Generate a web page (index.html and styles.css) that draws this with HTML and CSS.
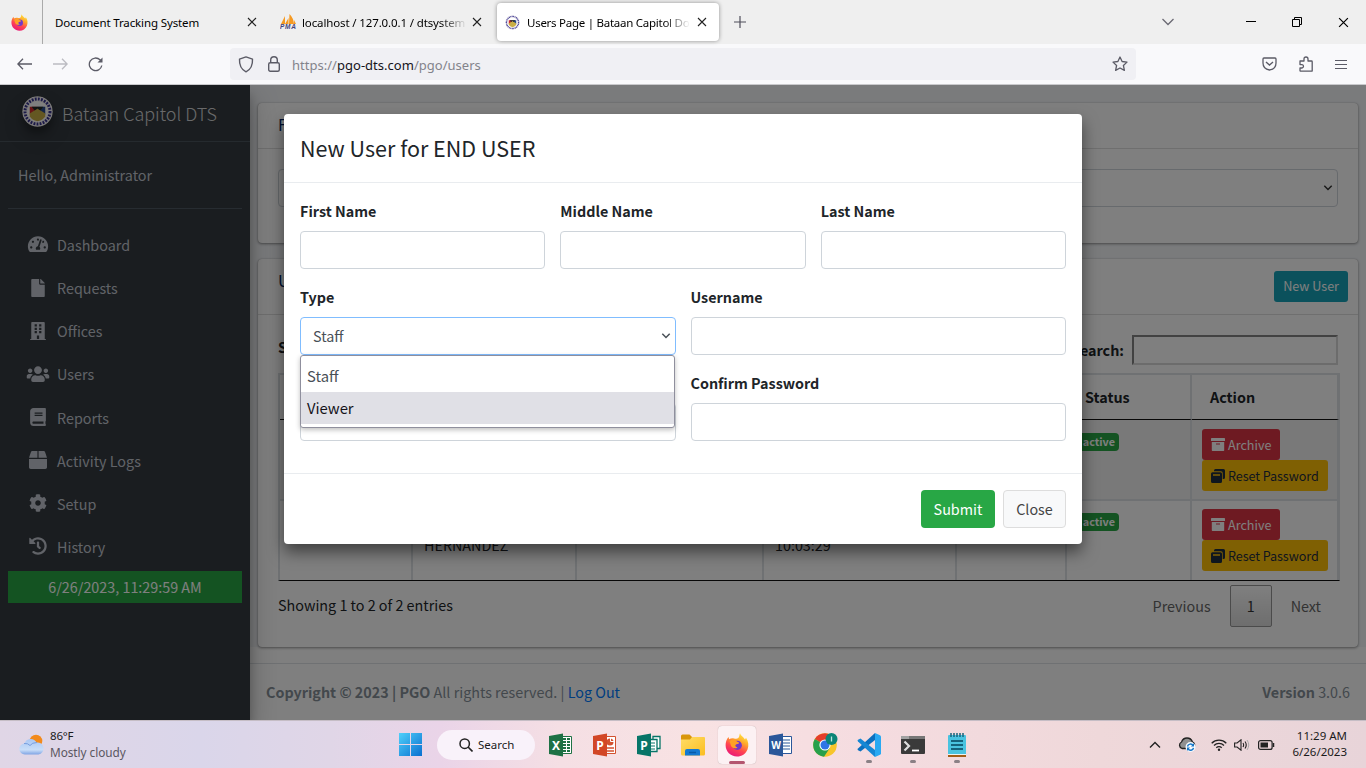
FILE: index.html
```html
<!DOCTYPE html>
<html lang="en">
<head>
<meta charset="utf-8">
<title>Users Page | Bataan Capitol Document Tracking System</title>
<link rel="stylesheet" href="styles.css">
</head>
<body>
<svg class="defs" width="0" height="0">
  <defs>
    <linearGradient id="fx" x1=".8" y1="0" x2=".3" y2="1"><stop offset="0" stop-color="#fff044"/><stop offset=".35" stop-color="#ffa52a"/><stop offset=".65" stop-color="#ff4550"/><stop offset="1" stop-color="#e8167a"/></linearGradient>
    <linearGradient id="win" x1="0" y1="0" x2="1" y2="1"><stop offset="0" stop-color="#4fd0fa"/><stop offset="1" stop-color="#0a6fd0"/></linearGradient>
    <linearGradient id="cloud" x1="0" y1="0" x2="0" y2="1"><stop offset="0" stop-color="#a9c7f4"/><stop offset=".7" stop-color="#c9def8"/><stop offset="1" stop-color="#7fa4e4"/></linearGradient>
    <linearGradient id="folder" x1="0" y1="0" x2="1" y2="1"><stop offset="0" stop-color="#ffdd68"/><stop offset="1" stop-color="#fbbd20"/></linearGradient>
    <symbol id="firefox" viewBox="0 0 24 24">
      <path fill="url(#fx)" d="M15 .3c.6 2.500 3.500 3.500 5 6.200l1-1.800C23.500 8 24 12.500 22.500 16.500c-1.800 4.500-5.700 7-10.500 7C5.500 23.500.6 18.500.6 12.300c0-3.300 1-6 2.900-8.300l.7 2.300c1.300-1 3.100-1.300 4.800-.9 1.500.6 3.200.6 4.300-.3C14.500 4 14.200 2 15 .3z"/>
      <circle cx="12.300" cy="12.300" r="4.600" fill="#7338c8"/>
      <path fill="#ffa126" d="M4.500 8c2.500-2 5.500-1.500 7.500.6 1 .8 2.600.8 2 1.700-.6 1-2.600.6-3.500 1.700-.5 1 .4 2.200 2 2.400-2.500 2-6.500.3-7-3.200z"/>
    </symbol>
    <symbol id="seal" viewBox="0 0 32 32">
      <circle cx="16" cy="16" r="15.700" fill="#f4f1f2"/>
      <circle cx="16" cy="16" r="12.900" fill="none" stroke="#37328f" stroke-width="3" stroke-dasharray="1.900 1.300"/>
      <circle cx="16" cy="16" r="10.500" fill="#fff"/>
      <path d="M8 11h8v8H8z" fill="#d0262c"/><path d="M16 11h8v8h-8z" fill="#27488c"/>
      <path d="M8 18l8-5 8 5v3q-2 4-8 5-6-1-8-5z" fill="#c9ae45"/><path d="M10 11h12l-3 4-3-2-3 2z" fill="#222b25"/>
    </symbol>
    <symbol id="close" viewBox="0 0 10 10"><path d="M1 1l8 8M9 1L1 9" fill="none" stroke="currentColor" stroke-width="1.100"/></symbol>
    <symbol id="chev" viewBox="0 0 10 6"><path d="M1.300 .8L5 4.500 8.700 .8" fill="none" stroke="currentColor" stroke-width="1.500"/></symbol>
    <symbol id="archive" viewBox="0 0 14 14"><path fill="currentColor" fill-rule="evenodd" d="M.7 0h12.600q.7 0 .7.700V3H0V.7Q0 0 .7 0zM.8 4h12.400v8.300q0 .7-.7.700H1.500q-.7 0-.7-.7zM5 5.500v1h4v-1z"/></symbol>
    <symbol id="clone" viewBox="0 0 14 14"><path fill="currentColor" fill-rule="evenodd" d="M4.500 0h8Q14 0 14 1.500v7Q14 10 12.500 10h-.8V4q0-1.700-1.700-1.700H3V1.500Q3 0 4.500 0zM1.500 3.200h8Q11 3.200 11 4.700v7.800Q11 14 9.500 14h-8Q0 14 0 12.500V4.700Q0 3.200 1.500 3.200zM2 5.200v1.600h7V5.200z"/></symbol>
  </defs>
</svg>

<header class="browser">
  <div class="tabstrip">
    <div class="pin"><svg width="17" height="17"><use href="#firefox"/></svg></div>
    <div class="tab tab-a"><span class="tab-title">Document Tracking System</span><svg class="x" width="10" height="10"><use href="#close"/></svg></div>
    <div class="tab tab-b">
      <svg width="17" height="16" viewBox="0 0 17 16"><path d="M5 2v8H1zM9.500 0q4 4 4.500 10H9zM8.500 4v6H5zM14 6l2 4h-2z" fill="#f59a23"/><text x="0" y="15" font-size="6.500" font-weight="bold" font-style="italic" fill="#44447c" font-family="Liberation Sans" textLength="16">PMA</text></svg>
      <span class="tab-title faded">localhost / 127.0.0.1 / dtsystem /</span><svg class="x" width="10" height="10"><use href="#close"/></svg>
    </div>
    <div class="tab tab-c">
      <svg width="15" height="15"><use href="#seal"/></svg>
      <span class="tab-title faded">Users Page | Bataan Capitol Docu</span><svg class="x" width="10" height="10"><use href="#close"/></svg>
    </div>
    <svg class="plus" width="12" height="12" viewBox="0 0 12 12"><path d="M6 0v12M0 6h12" stroke="#4f4e5a" stroke-width="1.200"/></svg>
    <div class="winctl">
      <svg width="12" height="8" viewBox="0 0 12 8"><path d="M.5 1l5.500 5.500L11.500 1" fill="none" stroke="#6b6a74" stroke-width="1.300"/></svg>
      <svg class="min" width="10" height="2"><path d="M0 .5h10" stroke="#000"/></svg>
      <svg class="max" width="10" height="10" viewBox="0 0 10 10"><path d="M.5 2.500h7v7h-7zM2.500 2.500v-2h7v7h-2" fill="none" stroke="#000"/></svg>
      <svg width="11" height="11"><use href="#close"/></svg>
    </div>
  </div>
  <div class="toolbar">
    <div class="nav">
      <svg width="15" height="12" viewBox="0 0 15 12"><path d="M6 .7L.9 6 6 11.300M1 6h14" fill="none" stroke="#5b5b66" stroke-width="1.300"/></svg>
      <svg width="15" height="12" viewBox="0 0 15 12"><path d="M9 .7L14.100 6 9 11.300M14 6H0" fill="none" stroke="#bcbcc2" stroke-width="1.300"/></svg>
      <svg width="16" height="16" viewBox="0 0 16 16"><path d="M13.800 9.500A6.300 6.300 0 1 1 12 3.800l1 1" fill="none" stroke="#5b5b66" stroke-width="1.300"/><path d="M14.500 1.500v5H9.500z" fill="#5b5b66"/></svg>
    </div>
    <div class="urlbar">
      <svg width="16" height="17" viewBox="0 0 16 17"><path d="M8 .9l6.500 2.200c.3 5.500-1 10-6.500 12.800C2.500 13 1.200 8.600 1.500 3.100z" fill="none" stroke="#5b5b66" stroke-width="1.400" stroke-linejoin="round"/></svg>
      <svg width="12" height="16" viewBox="0 0 12 16"><rect x=".7" y="6.700" width="10.600" height="8.500" rx="1.500" fill="none" stroke="#5b5b66" stroke-width="1.400"/><path d="M2.700 6.500V4a3.300 3.300 0 0 1 6.600 0v2.500" fill="none" stroke="#5b5b66" stroke-width="1.400"/></svg>
      <span class="url">https://<b>pgo-dts.com</b>/pgo/users</span>
      <svg class="star" width="16" height="16" viewBox="0 0 16 16"><path d="M8 1l2.100 4.500 4.900.6-3.600 3.400 1 4.900L8 12l-4.400 2.400 1-4.900L1 6.100l4.900-.6z" fill="none" stroke="#5b5b66" stroke-width="1.300" stroke-linejoin="round"/></svg>
    </div>
    <div class="tools">
      <svg width="15" height="14" viewBox="0 0 15 14"><path d="M2 1h11q1 0 1 1v4q0 6-6.500 7Q1 12 1 6V2q0-1 1-1z" fill="none" stroke="#5b5b66" stroke-width="1.300"/><path d="M4 5l3.500 3L11 5" fill="none" stroke="#5b5b66" stroke-width="1.400"/></svg>
      <svg width="14" height="16" viewBox="0 0 14 16"><path d="M1 5h4V3q0-2 2-2t2 2v2h3.500q.7 0 .7.700v9.400H1.700q-.7 0-.7-.7V12h2q1.500-.2 1.500-1.700T3 8.600H1z" fill="none" stroke="#5b5b66" stroke-width="1.300" stroke-linejoin="round"/></svg>
      <svg width="12" height="11" viewBox="0 0 12 11"><path d="M0 1.500h12M0 5.500h12M0 9.500h12" stroke="#5b5b66" stroke-width="1.200"/></svg>
    </div>
  </div>
</header>

<main class="page">
  <aside class="sidebar">
    <div class="brand"><svg width="31" height="31"><use href="#seal"/></svg><span>Bataan Capitol DTS</span></div>
    <div class="hello">Hello, Administrator</div>
    <nav class="menu">
      <a><svg viewBox="0 0 576 512"><path d="M288 32C128.940 32 0 160.940 0 320c0 52.800 14.250 102.260 39.060 144.800 5.610 9.620 16.300 15.200 27.440 15.200h443c11.140 0 21.830-5.580 27.440-15.200C561.750 422.260 576 372.800 576 320c0-159.060-128.940-288-288-288zm0 64c14.710 0 26.580 10.130 30.320 23.650-1.110 2.260-2.640 4.230-3.450 6.670l-9.220 27.670c-5.130 3.490-10.970 6.010-17.640 6.010-17.670 0-32-14.330-32-32S270.330 96 288 96zM96 384c-17.670 0-32-14.330-32-32s14.330-32 32-32 32 14.330 32 32-14.330 32-32 32zm48-160c-17.670 0-32-14.330-32-32s14.330-32 32-32 32 14.330 32 32-14.330 32-32 32zm246.770-72.410l-61.330 184C343.130 347.330 352 364.540 352 384c0 11.720-3.380 22.550-8.880 32H232.880c-5.500-9.450-8.880-20.280-8.880-32 0-33.940 26.500-61.430 59.900-63.590l61.340-184.010c4.170-12.560 17.730-19.450 30.360-15.170 12.570 4.190 19.350 17.790 15.170 30.360zm14.660 57.200l15.520-46.550c3.470-1.290 7.130-2.230 11.050-2.230 17.670 0 32 14.330 32 32s-14.330 32-32 32c-11.380-.01-20.890-6.280-26.570-15.220zM480 384c-17.670 0-32-14.330-32-32s14.330-32 32-32 32 14.330 32 32-14.330 32-32 32z"/></svg>Dashboard</a>
      <a><svg viewBox="0 0 384 512"><path d="M224 136V0H24C10.700 0 0 10.700 0 24v464c0 13.300 10.700 24 24 24h336c13.300 0 24-10.700 24-24V160H248c-13.200 0-24-10.800-24-24zm160-14.100v6.100H256V0h6.100c6.400 0 12.500 2.500 17 7l97.900 98c4.500 4.500 7 10.600 7 16.900z"/></svg>Requests</a>
      <a><svg viewBox="0 0 448 512"><path fill-rule="evenodd" d="M436 480h-20V24c0-13-11-24-24-24H56C43 0 32 11 32 24v456H12c-7 0-12 5-12 12v20h448v-20c0-7-5-12-12-12zM128 64h64v64h-64zM256 64h64v64h-64zM128 160h64v64h-64zM256 160h64v64h-64zM128 256h64v64h-64zM256 256h64v64h-64zM192 384h64v96h-64z"/></svg>Offices</a>
      <a><svg viewBox="0 0 640 512"><path d="M96 224c35.300 0 64-28.700 64-64s-28.700-64-64-64-64 28.700-64 64 28.700 64 64 64zm448 0c35.300 0 64-28.700 64-64s-28.700-64-64-64-64 28.700-64 64 28.700 64 64 64zm32 32h-64c-17.600 0-33.500 7.100-45.100 18.600 40.300 22.100 68.900 62 75.100 109.400h66c17.700 0 32-14.300 32-32v-32c0-35.300-28.700-64-64-64zm-256 0c61.900 0 112-50.100 112-112S381.900 32 320 32 208 82.100 208 144s50.100 112 112 112zm76.800 32h-8.300c-20.800 10-43.900 16-68.500 16s-47.600-6-68.500-16h-8.300C179.600 288 128 339.600 128 403.200V432c0 26.500 21.500 48 48 48h288c26.500 0 48-21.500 48-48v-28.800c0-63.600-51.600-115.200-115.200-115.200zm-223.700-13.400C161.500 263.100 145.600 256 128 256H64c-35.300 0-64 28.700-64 64v32c0 17.700 14.300 32 32 32h65.900c6.300-47.400 34.900-87.300 75.200-109.400z"/></svg>Users</a>
      <a><svg viewBox="0 0 448 512"><path d="M448 360V24c0-13.300-10.700-24-24-24H96C43 0 0 43 0 96v320c0 53 43 96 96 96h328c13.300 0 24-10.700 24-24v-16c0-7.500-3.500-14.300-8.900-18.700-4.200-15.400-4.200-59.300 0-74.700 5.400-4.300 8.900-11.100 8.900-18.600zM128 134c0-3.300 2.700-6 6-6h212c3.300 0 6 2.700 6 6v20c0 3.300-2.700 6-6 6H134c-3.300 0-6-2.700-6-6v-20zm0 64c0-3.300 2.700-6 6-6h212c3.300 0 6 2.700 6 6v20c0 3.300-2.700 6-6 6H134c-3.300 0-6-2.700-6-6v-20zm253.400 250H96c-17.700 0-32-14.300-32-32 0-17.600 14.400-32 32-32h285.400c-1.900 17.100-1.900 46.900 0 64z"/></svg>Reports</a>
      <a><svg viewBox="0 0 512 512"><path d="M509.500 184.600L458.900 32.800C452.400 13.200 434.100 0 413.400 0H272v192h238.700c-.4-2.500-.4-5-1.200-7.400zM240 0H98.600c-20.700 0-39 13.200-45.500 32.800L2.500 184.600c-.8 2.400-.8 4.900-1.200 7.400H240V0zM0 224v240c0 26.500 21.500 48 48 48h416c26.500 0 48-21.500 48-48V224H0z"/></svg>Activity Logs</a>
      <a><svg viewBox="0 0 512 512"><path d="M487.400 315.700l-42.600-24.600c4.300-23.200 4.300-47 0-70.200l42.600-24.600c4.900-2.800 7.100-8.600 5.500-14-11.100-35.600-30-67.800-54.700-94.600-3.800-4.100-10-5.100-14.800-2.300L380.800 110c-17.900-15.400-38.500-27.300-60.800-35.100V25.800c0-5.600-3.900-10.500-9.400-11.700-36.700-8.200-74.300-7.800-109.200 0-5.500 1.200-9.400 6.100-9.400 11.700V75c-22.200 7.900-42.800 19.800-60.800 35.100L88.700 85.500c-4.900-2.800-11-1.900-14.800 2.300-24.700 26.700-43.600 58.900-54.700 94.600-1.700 5.400.6 11.200 5.500 14L67.300 221c-4.300 23.200-4.300 47 0 70.200l-42.600 24.600c-4.900 2.800-7.100 8.600-5.500 14 11.100 35.600 30 67.800 54.700 94.600 3.800 4.100 10 5.100 14.800 2.300l42.600-24.600c17.900 15.400 38.500 27.300 60.800 35.100v49.200c0 5.600 3.900 10.500 9.400 11.700 36.700 8.200 74.300 7.800 109.200 0 5.500-1.200 9.400-6.100 9.400-11.700v-49.200c22.200-7.900 42.800-19.800 60.800-35.100l42.600 24.600c4.900 2.800 11 1.900 14.800-2.300 24.700-26.700 43.600-58.900 54.700-94.600 1.500-5.500-.7-11.300-5.600-14.100zM256 336c-44.100 0-80-35.900-80-80s35.900-80 80-80 80 35.900 80 80-35.900 80-80 80z"/></svg>Setup</a>
      <a><svg viewBox="0 0 512 512"><path d="M504 255.531c.253 136.640-111.180 248.372-247.820 248.468-59.015.042-113.223-20.530-155.822-54.911-11.077-8.940-11.905-25.541-1.839-35.607l11.267-11.267c8.609-8.609 22.353-9.551 31.891-1.984C173.062 425.135 212.781 440 256 440c101.705 0 184-82.311 184-184 0-101.705-82.311-184-184-184-48.814 0-93.149 18.969-126.068 49.932l50.754 50.754c10.080 10.080 2.941 27.314-11.313 27.314H24c-8.837 0-16-7.163-16-16V38.627c0-14.254 17.234-21.393 27.314-11.314l49.372 49.372C129.209 34.136 189.552 8 256 8c136.810 0 247.747 110.780 248 247.531zm-180.912 78.784l9.823-12.630c8.138-10.463 6.253-25.542-4.210-33.679L288 256.349V152c0-13.255-10.745-24-24-24h-16c-13.255 0-24 10.745-24 24v135.651l65.409 50.874c10.463 8.137 25.541 6.253 33.679-4.210z"/></svg>History</a>
    </nav>
    <div class="clock">6/26/2023, 11:29:59 AM</div>
  </aside>

  <section class="content">
    <div class="cards">
      <div class="card filter">
        <div class="card-head"><span class="card-title">Filter</span></div>
        <div class="card-body"><div class="select"><svg width="10" height="6"><use href="#chev"/></svg></div></div>
      </div>
      <div class="card users">
        <div class="card-head"><span class="card-title">Users</span><span class="btn info">New User</span></div>
        <div class="card-body">
          <div class="table-top"><b>Show</b><span class="search"><b>Search:</b><i class="search-box"></i></span></div>
          <div class="table">
            <div class="tr th"><span></span><span></span><span></span><span></span><span></span><span>Status</span><span>Action</span></div>
            <div class="tr odd"><span></span><span></span><span></span><span></span><span></span><span><em class="badge">active</em></span>
              <span><em class="btn danger"><svg width="14" height="14"><use href="#archive"/></svg>Archive</em><em class="btn warning"><svg width="14" height="14"><use href="#clone"/></svg>Reset Password</em></span></div>
            <div class="tr last"><span></span><span class="low">HERNANDEZ</span><span></span><span class="low">10:03:29</span><span></span><span><em class="badge">active</em></span>
              <span><em class="btn danger"><svg width="14" height="14"><use href="#archive"/></svg>Archive</em><em class="btn warning"><svg width="14" height="14"><use href="#clone"/></svg>Reset Password</em></span></div>
          </div>
          <div class="table-foot"><span class="showing">Showing 1 to 2 of 2 entries</span><span class="pager">Previous<i class="current">1</i>Next</span></div>
        </div>
      </div>
    </div>
    <footer class="footer"><span><b>Copyright © 2023 | PGO</b> All rights reserved. | <a>Log Out</a></span><span><b>Version</b> 3.0.6</span></footer>
  </section>

  <div class="backdrop">
    <div class="modal">
      <div class="modal-head">New User for END USER</div>
      <div class="modal-body">
        <div class="row three">
          <label>First Name<i class="field"></i></label><label>Middle Name<i class="field"></i></label><label>Last Name<i class="field"></i></label>
        </div>
        <div class="row two">
          <label>Type<span class="field focus">Staff<svg width="10" height="6"><use href="#chev"/></svg></span>
            <span class="options"><span class="option">Staff</span><span class="option hover">Viewer</span></span></label>
          <label>Username<i class="field"></i></label>
        </div>
        <div class="row two"><label>&nbsp;<i class="field"></i></label><label>Confirm Password<i class="field"></i></label></div>
      </div>
      <div class="modal-foot"><span class="mbtn submit">Submit</span><span class="mbtn cancel">Close</span></div>
    </div>
  </div>
</main>

<footer class="taskbar">
  <div class="weather">
    <svg width="25" height="22" viewBox="0 0 25 22"><circle cx="17" cy="7" r="6.300" fill="#f28a1c"/><path d="M6 20.500a5.500 5.500 0 0 1-.5-11 6.500 6.500 0 0 1 12-1 6 6 0 0 1 2 12z" fill="url(#cloud)"/><path d="M5 9.500q4-.5 6 2 2-3 7-3" fill="none" stroke="#779ddd"/></svg>
    <div class="weather-text"><div class="temp">86°F</div><div class="cond">Mostly cloudy</div></div>
  </div>
  <div class="apps">
    <svg class="start" width="23" height="23" viewBox="0 0 23 23"><path fill="url(#win)" d="M0 0h11v11H0zM12 0h11v11H12zM0 12h11v11H0zM12 12h11v11H12z"/></svg>
    <div class="task-search"><svg width="14" height="14" viewBox="0 0 14 14"><circle cx="5.700" cy="5.700" r="4.700" fill="none" stroke="#222" stroke-width="1.500"/><path d="M9 9l4.500 4.500" stroke="#222" stroke-width="1.600"/></svg><span>Search</span></div>
    <div class="app"><svg width="24" height="24" viewBox="0 0 24 24"><path d="M12 3.500h10.500v17H12z" fill="#fff" stroke="#207245"/><path d="M14 6h7M14 9h7M14 12h7M14 15h7M14 18h7" stroke="#207245" stroke-width="1.800"/><path d="M17.500 4v16" stroke="#fff"/><path d="M0 3l14-2.500v23L0 21z" fill="#1e7145"/><text x="7" y="16.500" class="glyph">X</text></svg></div>
    <div class="app"><svg width="24" height="24" viewBox="0 0 24 24"><path d="M12 3.500h10.500v17H12z" fill="#fff" stroke="#d35230"/><circle cx="17" cy="9" r="3.500" fill="#d35230"/><path d="M17.500 5v3.500H21" fill="none" stroke="#fff"/><path d="M14 15h7M14 18h7" stroke="#d35230" stroke-width="1.500"/><path d="M0 3l14-2.500v23L0 21z" fill="#d24726"/><text x="7" y="16.500" class="glyph">P</text></svg></div>
    <div class="app"><svg width="24" height="24" viewBox="0 0 24 24"><path d="M16 3.500h7v12h-7z" fill="#fff" stroke="#077568" stroke-width="1.300"/><path d="M12 6.500h8v12h-8z" fill="#fff" stroke="#077568" stroke-width="1.300"/><path d="M14 10h4M14 13h4M14 16h4" stroke="#077568"/><path d="M0 3l14-2.500v23L0 21z" fill="#077568"/><text x="7" y="16.500" class="glyph">P</text></svg></div>
    <div class="app"><svg width="24" height="24" viewBox="0 0 24 24"><path d="M0 3q0-1.500 1.500-1.500h7L11 4v4H0z" fill="#d9960b"/><path d="M0 6.500h9L11 4h12q1 0 1 1v16q0 1.500-1.500 1.500h-21Q0 22.500 0 21z" fill="url(#folder)"/><path d="M4 22.500V18q0-2 2-2h11q2 0 2 2v4.500z" fill="#1479d1"/><path d="M8 19.500h7" stroke="#075ba8" stroke-width="1.500"/></svg></div>
    <div class="app active"><svg width="24" height="24"><use href="#firefox"/></svg></div>
    <div class="app"><svg width="24" height="24" viewBox="0 0 24 24"><path d="M12 3.500h10.500v17H12z" fill="#fff" stroke="#2b579a"/><path d="M14 7h7M14 10h7M14 13h7M14 16h7" stroke="#2b579a"/><path d="M0 3l14-2.500v23L0 21z" fill="#2b579a"/><text x="7" y="16.300" class="glyph small">W</text></svg></div>
    <div class="app"><svg width="25" height="24" viewBox="0 0 25 24"><circle cx="12" cy="12" r="11.800" fill="#f7c52b"/><path d="M12 12L1.800 6A11.800 11.800 0 0 1 22.200 6z" fill="#e43e2b"/><path d="M12 12L1.800 6A11.800 11.800 0 0 0 11 23.800l6-9z" fill="#27a04b"/><path d="M12 6h10.300L12 12z" fill="#e43e2b"/><circle cx="12" cy="12" r="5.600" fill="#fff"/><circle cx="12" cy="12" r="4.500" fill="#2f75e6"/><circle cx="18.500" cy="6" r="6" fill="#0b8577"/><path d="M18.500 3.500v5" stroke="#bde5df" stroke-width="1.300"/></svg></div>
    <div class="app open"><svg width="24" height="24" viewBox="0 0 24 24"><path d="M18 0l5 2.200q1 .5 1 1.500v16.600q0 1-1 1.500L18 24z" fill="#29a9f2"/><path d="M18 0v7L3.500 18.500 1 17.300Q0 16.500 1 15.500z" fill="#0b70bf"/><path d="M18 24v-7L3.500 5.500 1 6.700Q0 7.500 1 8.500z" fill="#1687d4"/></svg></div>
    <div class="app open"><svg width="24" height="20" viewBox="0 0 24 20"><rect y="1" width="24" height="18" rx="1" fill="#3a3a3a"/><path d="M0 1h24v3H0z" fill="#a2a2a2"/><path d="M8 1h16v3H8z" fill="#777"/><path d="M3.500 6.500L8 11l-4.500 4.500" fill="none" stroke="#ddd" stroke-width="2.200"/><path d="M11 15.500h7" stroke="#fff" stroke-width="1.800"/></svg></div>
    <div class="app open"><svg width="18" height="24" viewBox="0 0 18 24"><rect y="2" width="18" height="20" rx="1" fill="#4ac3e0"/><path d="M3 0v4M6 0v4M9 0v4M12 0v4M15 0v4" stroke="#18637a" stroke-width="1.500"/><path d="M3 8h12M3 12h12M3 16h12" stroke="#15637d" stroke-width="1.800"/><path d="M0 21h18v1H0z" fill="#e9f4f5"/><path d="M0 22h18v2H0z" fill="#a45d17"/></svg></div>
  </div>
  <div class="tray">
    <svg width="12" height="8" viewBox="0 0 12 8"><path d="M1 6.500l5-5 5 5" fill="none" stroke="#222" stroke-width="1.400"/></svg>
    <svg class="cloudsync" width="18" height="15" viewBox="0 0 18 15"><path d="M4 11.500A3.500 3.500 0 0 1 3.500 5Q5 1 9 1t5.500 4q2.500 1 2 4l-2 2.500z" fill="#909090" stroke="#222" stroke-width="1.300"/><circle cx="12.500" cy="10" r="5" fill="#f6fafd"/><path d="M9.500 9.500a3 3 0 0 1 5.500-1M15.500 10.800a3 3 0 0 1-5.500 1" fill="none" stroke="#1676c8" stroke-width="1.500"/><path d="M16 6v3.500h-3zM9 14v-3.500h3z" fill="#1676c8"/></svg>
    <svg class="wifi" width="16" height="12" viewBox="0 0 16 12"><path d="M.7 4.200a10.300 10.300 0 0 1 14.600 0M3 6.500a7 7 0 0 1 10 0M5.300 8.700a3.800 3.800 0 0 1 5.400 0" fill="none" stroke="#222" stroke-width="1.300"/><circle cx="8" cy="10.700" r="1.200" fill="#222"/></svg>
    <svg class="vol" width="16" height="12" viewBox="0 0 16 12"><path d="M.6 4h2.500L7 .8v10.400L3.100 8H.6zM9 4q1.300 2 0 4M11 2.500q2.500 3.500 0 7" fill="none" stroke="#222" stroke-width="1.100"/><path d="M13 1q3.500 5 0 10" fill="none" stroke="#aaa"/></svg>
    <svg class="bat" width="17" height="10" viewBox="0 0 17 10"><rect x=".6" y=".6" width="13.500" height="8.800" rx="2" fill="none" stroke="#222" stroke-width="1.200"/><rect x="2.500" y="2.500" width="7.500" height="5" fill="#222"/><path d="M15.500 3v4" stroke="#222" stroke-width="1.500"/></svg>
    <div class="date"><div>11:29 AM</div><div>6/26/2023</div></div>
  </div>
</footer>
</body>
</html>
```
FILE: styles.css
```css
* { box-sizing: border-box; }
body { margin: 0; width: 1366px; height: 768px; overflow: hidden; display: flex; flex-direction: column; font: 14.35px/24px "Noto Sans CJK JP", "Noto Sans", sans-serif; color: #212529; }
i, em { font-style: normal; }
svg { display: block; flex: none; }
.defs { position: absolute; }

/* browser chrome */
.browser { height: 85px; flex: none; font-family: "Noto Sans", "Open Sans", sans-serif; background: #f9f9fb; border-bottom: 1px solid #c9c9cc; }
.tabstrip { height: 44px; background: #efefef; display: flex; align-items: center; font-size: 11.5px; color: #000; }
.pin { width: 43px; height: 44px; border-right: 1px solid #aaa; display: flex; align-items: center; padding-left: 11px; }
.tab { display: flex; align-items: center; height: 38px; white-space: nowrap; overflow: hidden; flex: none; }
.tab .x { margin-left: auto; color: #222; }
.tab-title { overflow: hidden; letter-spacing: -0.13px; padding-top: 1px; }
.tab-a { width: 225px; padding: 0 11px 0 12px; }
.tab-b { width: 226px; padding: 0 12px 0 12px; gap: 5px; }
.tab-b .tab-title { width: 166px; }
.tab-c { width: 222px; margin-left: 3px; padding: 0 12px 0 8px; gap: 7px; background: #fff; border-radius: 4px; box-shadow: 0 0 4px rgba(0,0,0,.4); }
.tab-c .tab-title { width: 167px; letter-spacing: -0.26px; }
.faded { -webkit-mask-image: linear-gradient(90deg, #000 84%, transparent); mask-image: linear-gradient(90deg, #000 84%, transparent); }
.plus { margin-left: 15px; }
.winctl { margin-left: auto; display: flex; align-items: center; padding-right: 17px; }
.min { margin-left: 72px; }
.max { margin: 0 36px; }
.toolbar { height: 40px; display: flex; align-items: center; }
.nav { width: 230px; padding-left: 17px; display: flex; align-items: center; gap: 20.5px; }
.urlbar { width: 906px; height: 32px; background: #f0f0f4; border-radius: 4px; display: flex; align-items: center; padding: 0 8px; }
.urlbar svg + svg { margin-left: 14px; }
.url { margin-left: 12px; padding-top: 2px; font-size: 13px; color: #83838b; letter-spacing: 0.02px; }
.url b { font-weight: 400; color: #15141a; }
.star { margin-left: auto; }
.tools { display: flex; align-items: center; padding-left: 126px; gap: 22px; }

/* application */
.page { position: relative; height: 635px; flex: none; display: flex; background: #f4f6f9; overflow: hidden; }
.sidebar { width: 250px; background: #343a40; color: #c2c7d0; padding: 0 8px; box-shadow: 0 14px 28px rgba(0,0,0,.25), 0 10px 10px rgba(0,0,0,.22); position: relative; z-index: 2; }
.brand { margin: 0 -8px; height: 57px; border-bottom: 1px solid #4b545c; display: flex; align-items: center; gap: 9px; padding: 0 22px 3px; font-size: 17.95px; font-weight: 300; color: rgba(255,255,255,.8); white-space: nowrap; }
.brand svg { border-radius: 50%; box-shadow: 0 10px 20px rgba(0,0,0,.19), 0 6px 6px rgba(0,0,0,.23); }
.brand span { padding-top: 2px; }
.hello { height: 67px; border-bottom: 1px solid #4f5962; padding: 21px 10px 0; }
.menu { padding-top: 14.400px; height: 362px; }
.menu a { height: 43.150px; display: flex; align-items: center; padding-left: 17px; }
.menu svg { height: 18px; width: 26px; margin-right: 6px; margin-bottom: 1px; fill: #c2c7d0; }
.clock { height: 32px; background: #28a745; color: #fff; text-align: center; line-height: 32px; }

.content { flex: 1; display: flex; flex-direction: column; }
.cards { position: relative; z-index: 1; padding: 18px 8px 0; height: 562px; display: flex; flex-direction: column; gap: 16px; }
.card { background: #fff; border-radius: 4px; box-shadow: 0 0 1px rgba(0,0,0,.25), 0 1px 3px rgba(0,0,0,.4); }
.filter { height: 140px; }
.users { height: 388px; }
.card-head { display: flex; justify-content: space-between; align-items: center; border-bottom: 1px solid #dfdfdf; padding: 0 10px 0 20px; height: 46px; }
.users .card-head { height: 56px; }
.card-title { font-size: 16px; color: #001f60; padding-bottom: 3px; }
.users .card-title { padding-bottom: 13px; }
.card-body { padding: 20px 18px 0 20px; }
.select { height: 38px; width: 1060px; border: 1px solid #ced4da; border-radius: 4px; display: flex; align-items: center; justify-content: flex-end; padding-right: 4px; color: #333; }
.btn { display: flex; width: max-content; height: 31px; align-items: center; border-radius: 3px; padding: 0 9px; font-size: 12.6px; line-height: 20px; gap: 3px; }
.info { background: #17a2b8; color: #fff; padding-bottom: 1px; }
.danger { background: #dc3545; color: #fff; }
.warning { background: #ffc107; color: #1f2d3d; width: 126px; letter-spacing: -0.07px; white-space: nowrap; }
.table-top { display: flex; justify-content: space-between; height: 38px; align-items: flex-start; padding-right: 2px; }
.search { display: flex; align-items: center; gap: 8px; }
.search-box { width: 206px; height: 30px; border: 2px inset #d8d8d8; background: #fff; }
.table { width: 1062px; border: 2px solid #dee2e6; border-bottom: 1px solid #111; border-width: 2px 1px 1px 2px; }
.tr { display: grid; grid-template-columns: 133px 164px 187px 193px 110px 125px 147px; height: 81px; }
.tr > span { border-right: 2px solid #dee2e6; border-bottom: 2px solid #dee2e6; padding: 9px 0 0 10px; }
.tr.th { height: 45px; font-weight: 700; }
.tr.th > span { border-bottom: 1px solid #111; padding: 10px 0 0 18px; }
.odd { background: #f2f2f2; }
.tr.last { height: 79px; }
.tr.last > span { border-bottom: 0; padding-top: 8px; }
.tr.last > .low { padding: 32px 0 0 11px; }
.badge { display: block; width: 42px; height: 18px; margin: 4px 0 0; background: #28a745; border-radius: 4px; color: #fff; font-size: 10.800px; line-height: 17px; font-weight: 700; text-align: right; padding-right: 4px; }
.table-foot { display: flex; justify-content: space-between; }
.showing { padding-top: 12px; }
.pager { display: flex; align-items: center; padding: 4px 19px 0 0; color: #666; }
.current { width: 42px; height: 42px; margin: 0 19px; border: 1px solid #979797; border-radius: 2px; background: linear-gradient(#fff, #dcdcdc); color: #333; text-align: center; line-height: 40px; }
.footer { flex: 1; display: flex; justify-content: space-between; padding: 33px 16px 0; color: #869099; background: linear-gradient(#fff 16px, #dee2e6 16px, #dee2e6 17px, #fff 17px); }
.footer a { color: #007bff; }

/* dialog */
.backdrop { position: absolute; z-index: 3; inset: 0; background: rgba(0,0,0,.5); padding: 29px 284px; }
.modal { width: 798px; height: 430px; background: #fff; border-radius: 4px; box-shadow: 0 8px 16px rgba(0,0,0,.5); display: flex; flex-direction: column; }
.modal-head { height: 69px; border-bottom: 1px solid #e9ecef; padding: 16px 16px; font-size: 21.500px; line-height: 36px; }
.modal-body { height: 290px; padding: 16px; }
.row { display: grid; gap: 15px; height: 86px; }
.three { grid-template-columns: repeat(3, 1fr); }
.two { grid-template-columns: repeat(2, 1fr); }
.row label { position: relative; font-weight: 700; }
.field { display: flex; align-items: center; justify-content: space-between; height: 38px; margin-top: 8px; border: 1px solid #ced4da; border-radius: 4px; font-weight: 400; color: #495057; padding: 0 4px 0 12px; background: #fff; }
.focus { border-color: #80bdff; }
.options { position: absolute; z-index: 2; top: 70px; left: 0; width: 375px; height: 73px; background: #fff; border: 1px solid #8f8f9d; border-radius: 3px; padding-top: 4px; box-shadow: 0 2px 5px rgba(0,0,0,.25); font-weight: 400; color: #495057; font-size: 14.800px; }
.option { display: block; height: 32px; line-height: 32px; padding-left: 6px; }
.hover { background: #e0e0e6; color: #15141a; }
.modal-foot { flex: 1; border-top: 1px solid #e9ecef; display: flex; justify-content: flex-end; gap: 8px; padding: 16px; }
.mbtn { height: 38px; line-height: 38px; border-radius: 4px; text-align: center; }
.submit { width: 74px; background: #28a745; color: #fff; }
.cancel { width: 63px; background: #f8f9fa; border: 1px solid #ddd; line-height: 35px; color: #444; }

/* taskbar */
.taskbar { height: 48px; flex: none; border-top: 1px solid #c5bdc5; background: linear-gradient(90deg, #e0d6e6 0, #dad6ea 200px, #e0d6e7 330px, #ead4e8 440px, #f5dfe4 560px, #f8e2e3 700px, #f5dce0 860px, #efd8da 1100px, #e8d4d9 1366px); display: flex; align-items: center; font: 11.500px/16px "Noto Sans", "Open Sans", sans-serif; color: #1b1b1b; position: relative; }
.weather { width: 398px; padding-left: 19px; display: flex; align-items: center; gap: 7px; }
.weather-text { padding-bottom: 2px; margin-left: -1px; }
.temp { letter-spacing: -0.2px; }
.cond { color: #5b5761; font-size: 11.800px; letter-spacing: -0.05px; }
.apps { display: flex; align-items: center; height: 47px; }
.start { margin: 0 15px 0 1px; }
.task-search { width: 98px; height: 30px; border-radius: 15px; background: #f9f2fa; display: flex; align-items: center; padding-left: 22px; gap: 5px; margin-right: 7px; }
.app { width: 38px; height: 38px; margin-right: 6px; border-radius: 4px; display: flex; align-items: center; justify-content: center; position: relative; }
.active { background: #fcf1f3; box-shadow: 0 0 1px rgba(0,0,0,.3); }
.active::after, .open::after { content: ""; position: absolute; bottom: 1px; width: 6px; height: 3px; border-radius: 2px; background: #8a8085; }
.active::after { width: 16px; background: #b4566f; bottom: 0; }
.glyph { fill: #fff; font: bold 12px "Noto Sans", sans-serif; text-anchor: middle; }
.small { font-size: 10px; }
.tray { margin-left: auto; display: flex; align-items: center; padding-right: 19px; }
.cloudsync { margin-left: 17px; }
.wifi { margin-left: 15px; }
.vol { margin-left: 7px; }
.bat { margin-left: 8px; }
.date { width: 72px; text-align: right; font-size: 11.500px; padding-bottom: 2px; }
```
